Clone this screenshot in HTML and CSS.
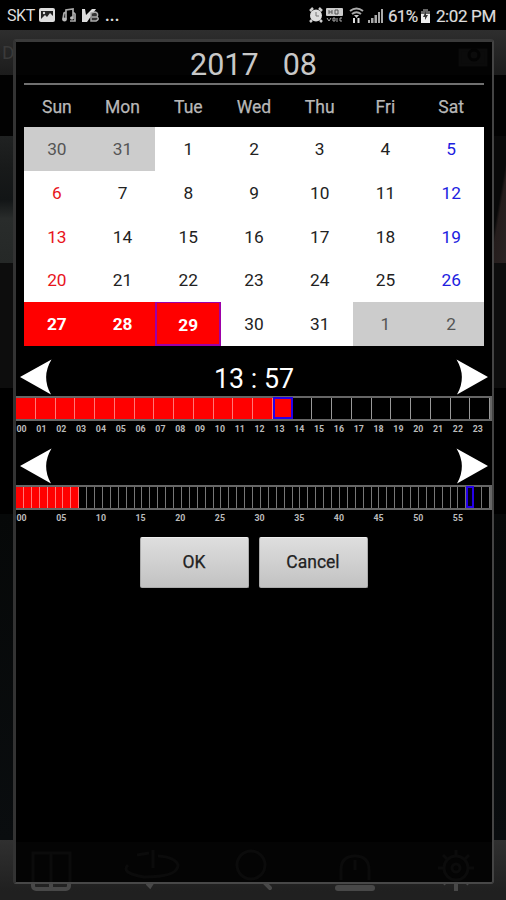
FILE: index.html
```html
<!DOCTYPE html>
<html lang="en">
<head>
<meta charset="utf-8">
<title>Playback date</title>
<link rel="stylesheet" href="styles.css">
</head>
<body>
<div class="screen">
  <header class="status">
    <span class="carrier">SKT</span>
    <svg class="notices" width="66" height="18" viewBox="0 0 66 18">
      <rect x="0" y="1" width="16" height="14" rx="2" fill="#ddd"/>
      <path d="M2 12V4h12v5l-3-3-3 4-2-2z" fill="#222"/><circle cx="5" cy="6" r="1.2" fill="#ddd"/>
      <path d="M27 12V3l7-1v8M27 5l-2 1-1 6M34 5l2 2v7h-5" fill="none" stroke="#aaa" stroke-width="1.7"/>
      <ellipse cx="25.5" cy="12.5" rx="2.3" ry="2" fill="#bbb"/><ellipse cx="33" cy="11" rx="2" ry="1.8" fill="#bbb"/>
      <path d="M43 2h3l1 6 6-6h4l-9 13h-5z" fill="#ddd"/>
      <path d="M52 6v8h5q4-2 1-4 2-4-2-5zM53 10h5" fill="#333" stroke="#aaa" stroke-width="1.5"/>
    </svg>
    <span class="more">...</span>
    <svg class="signals" width="78" height="18" viewBox="0 0 78 18">
      <circle cx="8" cy="8.500" r="6" fill="#ddd"/><path d="M2 4l3-3M11 1l3 3M4 13l-2 2M12 13l2 2" stroke="#ccc" stroke-width="2.500"/><path d="M8 5v4h3" fill="none" stroke="#777"/>
      <rect x="18" y="1" width="17" height="8" rx="1" fill="#ccc"/><path d="M21 3v4M24 3v4M21 5h3M27 3v4h3V3z" fill="none" stroke="#555"/>
      <path d="M19 11l2 3 2-3M25 11h2v3h-2zM29 11v4M34 11h-2v3h2" fill="none" stroke="#aaa"/>
      <path d="M42 4q6.500-5 13 0M44 7q4.500-3.500 9 0" fill="none" stroke="#aaa" stroke-width="2"/><path d="M46 8h5l-2.500 3z" fill="#ccc"/><path d="M46 11v5M50.500 11v5" stroke="#ddd" stroke-width="2"/>
      <path d="M60 13h2v3h-2zM63 11h2.500v5H63zM66.500 8H69v8h-2.500zM70 5h2v11h-2zM73 2h2v14h-2z" fill="#aaa"/>
    </svg>
    <span class="percent">61%</span>
    <svg class="battery" width="11" height="16" viewBox="0 0 11 16"><path d="M3 1h5v2h2v12H1V3h2z" fill="#666"/><path d="M1 6h9v9H1z" fill="#eee"/><path d="M6 3L3 9h2v3l3-5H6z" fill="#333"/></svg>
    <span class="clock">2:02 PM</span>
  </header>
  <div class="appbar">D</div>
  <div class="gap"></div>
  <div class="photo"><i></i><b></b></div>
  <div class="shade"></div>
  <div class="dark"></div>
  <div class="lower"></div>
  <footer class="toolbar">
    <svg width="506" height="60" viewBox="0 0 506 60" fill="none" stroke="#484848" stroke-width="4">
      <rect x="33" y="12" width="36" height="37" rx="3"/><path d="M51 12v37M148 44l2 2 2-3M264 42l6 6" stroke-linecap="round"/><path d="M338 48h34" stroke-width="6" stroke-linecap="round"/><path d="M456 40v11M443 41l3 3M469 41l-3 3"/>
    </svg>
  </footer>

  <main class="dialog">
    <svg class="ghosts" width="476" height="840" viewBox="0 0 476 840" fill="none" stroke="#0b0b0b" stroke-width="3">
      <rect x="444" y="8" width="26" height="15" fill="#0b0b0b"/><circle cx="458" cy="13" r="5" stroke="#030303"/>
      <rect x="17" y="811" width="37" height="40"/><path d="M35 811v29M112 823q-8 8 16 12 34 0 34-12q-3-8-20-9M121 813l12-2M137 808v18"/><circle cx="235" cy="823" r="14"/><path d="M325 838v-10q0-14 14-14t14 14v10M339 818v10"/><circle cx="440" cy="826" r="12"/><circle cx="440" cy="826" r="4"/><path d="M440 808v6M422 826h6M452 826h6M427 813l4 4M453 813l-4 4"/>
    </svg>
    <h1 class="title"><span>2017</span><span>08</span></h1>
    <div class="days"><span>Sun</span><span>Mon</span><span>Tue</span><span>Wed</span><span>Thu</span><span>Fri</span><span>Sat</span></div>
    <div class="calendar">
      <span class="out">30</span><span class="out">31</span><span>1</span><span>2</span><span>3</span><span>4</span><span class="sat">5</span>
      <span class="sun">6</span><span>7</span><span>8</span><span>9</span><span>10</span><span>11</span><span class="sat">12</span>
      <span class="sun">13</span><span>14</span><span>15</span><span>16</span><span>17</span><span>18</span><span class="sat">19</span>
      <span class="sun">20</span><span>21</span><span>22</span><span>23</span><span>24</span><span>25</span><span class="sat">26</span>
      <span class="rec">27</span><span class="rec">28</span><span class="rec picked">29</span><span>30</span><span>31</span><span class="out">1</span><span class="out">2</span>
    </div>
    <div class="stepper">
      <svg width="32" height="36" viewBox="0 0 32 36"><path d="M0 18L31.500 0.500Q21 18 31 35.500z" fill="#fff"/></svg>
      <span class="time">13 : 57</span>
      <svg width="32" height="36" viewBox="0 0 32 36"><path d="M32 18L0.500 0.500Q11 18 1 35.500z" fill="#fff"/></svg>
    </div>
    <div class="track hours"><i class="on"></i><i class="on"></i><i class="on"></i><i class="on"></i><i class="on"></i><i class="on"></i><i class="on"></i><i class="on"></i><i class="on"></i><i class="on"></i><i class="on"></i><i class="on"></i><i class="on"></i><i class="on now"></i><i></i><i></i><i></i><i></i><i></i><i></i><i></i><i></i><i></i><i></i></div>
    <div class="labels hours"><span>00</span><span>01</span><span>02</span><span>03</span><span>04</span><span>05</span><span>06</span><span>07</span><span>08</span><span>09</span><span>10</span><span>11</span><span>12</span><span>13</span><span>14</span><span>15</span><span>16</span><span>17</span><span>18</span><span>19</span><span>20</span><span>21</span><span>22</span><span>23</span></div>
    <div class="stepper second">
      <svg width="32" height="36" viewBox="0 0 32 36"><path d="M0 18L31.500 0.500Q21 18 31 35.500z" fill="#fff"/></svg>
      <svg width="32" height="36" viewBox="0 0 32 36"><path d="M32 18L0.500 0.500Q11 18 1 35.500z" fill="#fff"/></svg>
    </div>
    <div class="track minutes"><i class="on"></i><i class="on"></i><i class="on"></i><i class="on"></i><i class="on"></i><i class="on"></i><i class="on"></i><i class="on"></i><i></i><i></i><i></i><i></i><i></i><i></i><i></i><i></i><i></i><i></i><i></i><i></i><i></i><i></i><i></i><i></i><i></i><i></i><i></i><i></i><i></i><i></i><i></i><i></i><i></i><i></i><i></i><i></i><i></i><i></i><i></i><i></i><i></i><i></i><i></i><i></i><i></i><i></i><i></i><i></i><i></i><i></i><i></i><i></i><i></i><i></i><i></i><i></i><i></i><i class="now"></i><i></i><i></i></div>
    <div class="labels fives"><span>00</span><span>05</span><span>10</span><span>15</span><span>20</span><span>25</span><span>30</span><span>35</span><span>40</span><span>45</span><span>50</span><span>55</span></div>
    <div class="actions"><button>OK</button><button>Cancel</button></div>
  </main>
</div>
</body>
</html>
```
FILE: styles.css
```css
* { box-sizing: border-box; }
body { margin: 0; background: #000; font-family: Roboto, "Liberation Sans", sans-serif; }
.screen { position: relative; width: 506px; height: 900px; overflow: hidden; }

.status { display: flex; height: 30px; padding: 2px 10px 0 7px; align-items: center; color: #ddd; font-size: 16px; line-height: 30px; white-space: nowrap; }
.carrier { width: 32px; letter-spacing: -0.4px; }
.more { width: 203px; font-weight: 700; letter-spacing: 0.2px; }
.signals { margin-right: 2px; }
.percent { width: 32px; letter-spacing: -0.6px; font-size: 17px; }
.battery { margin-right: 5px; }
.clock { font-size: 17px; letter-spacing: -0.35px; }
.notices, .signals, .battery, .percent, .clock { flex-shrink: 0; }
.percent, .clock { -webkit-text-stroke: 0.2px #ddd; }

.appbar { height: 45px; padding-left: 2px; background: linear-gradient(#2e2e2e, #1c1c1c); color: #3a3a3a; font-size: 19px; line-height: 46px; }
.gap { height: 61px; background: #020202; }
.photo { display: flex; justify-content: space-between; height: 127px; }
.photo i { width: 14px; background: linear-gradient(#202222, #181a1a 25%, #121516 50%, #292c2b 65%, #252827); }
.photo b { width: 12px; background: linear-gradient(100deg, #090909 48%, #251d1c 56%, #2b2424); }
.shade { height: 125px; background: #0d0d0d; }
.dark { height: 126px; background: #000; }
.lower { height: 326px; background: linear-gradient(#060808, #0a0d0f); }
.toolbar { height: 60px; background: linear-gradient(#303030, #202020 85%); }

.dialog { position: absolute; left: 13px; top: 39px; width: 481px; height: 845px; border: 3px solid; border-right-width: 2px; border-bottom-width: 2px; border-radius: 3px; background: linear-gradient(#030303 0 33px, #000 33px 800px, #040404 800px); border-color: #3a3a3a #444 #484848 #333; }
.ghosts { position: absolute; left: 0; top: 0; }
.dialog > :not(.ghosts) { position: relative; }
.title { display: flex; gap: 24px; justify-content: center; margin: 0 8px; height: 43px; padding-top: 3px; border-bottom: 2px solid #707070; color: #c8c8c8; font-size: 30.500px; font-weight: 400; line-height: 39px; }
.title span { position: relative; left: -0.5px; }
.days { display: grid; grid-template-columns: repeat(7, 1fr); margin: 0 8px; height: 42px; color: #b8b8b8; font-size: 17.500px; line-height: 44px; text-align: center; -webkit-text-stroke: 0.25px #b8b8b8; }
.calendar { display: grid; grid-template: repeat(5, 43.8px) / repeat(7, 1fr); margin: 0 8px; height: 219px; background: #fff; color: #222; font-size: 17.300px; text-align: center; }
.calendar span { line-height: 43.8px; padding-top: 1px; height: 43.8px; }
.calendar .out { background: #ccc; color: #555; }
.calendar .sun { color: #e8141c; }
.calendar .sat { color: #2020e0; }
.calendar .rec { background: #f00; color: #fff; font-weight: 700; }
.calendar .picked { border: 2px solid #9c00a8; border-top-width: 1px; line-height: 42.8px; padding-top: 0.5px; }

.stepper { display: flex; justify-content: space-between; align-items: center; height: 36px; margin-top: 13px; padding: 0 4px; }
.time { color: #fff; font-size: 26.8px; line-height: 36px; padding-top: 3px; }
.track { display: grid; height: 25px; margin-top: 1px; border: 2px solid #666; border-left: 0; }
.hours { grid-template-columns: repeat(24, 1fr); }
.minutes { grid-template-columns: repeat(60, 1fr); }
.track i { border-right: 1px solid #999; }
.minutes i { border-color: #777; }
.track .on { background: #f00; border-color: #ff7777; }
.track .now { border: 2px solid #2500e8; margin-top: -1px; }
.minutes .now { background: #000018; }
.labels { display: grid; height: 16px; color: #bbb; font-size: 8.800px; font-weight: 700; line-height: 16px; letter-spacing: 0; }
.labels span { padding-left: 0.500px; }
.fives { grid-template-columns: repeat(12, 1fr); }
.second { margin-top: 11px; }
.actions { display: flex; gap: 10px; justify-content: center; margin: 11px 1px 0 0; }
.actions button { width: 109px; height: 51px; padding: 1px 0 0; border: 1px solid #aaa; border-top-color: #eee; border-radius: 2px; background: linear-gradient(#dedede, #c2c2c2); color: #222; font: 400 17.500px/1 Roboto, sans-serif; -webkit-text-stroke: 0.25px #222; }
```
